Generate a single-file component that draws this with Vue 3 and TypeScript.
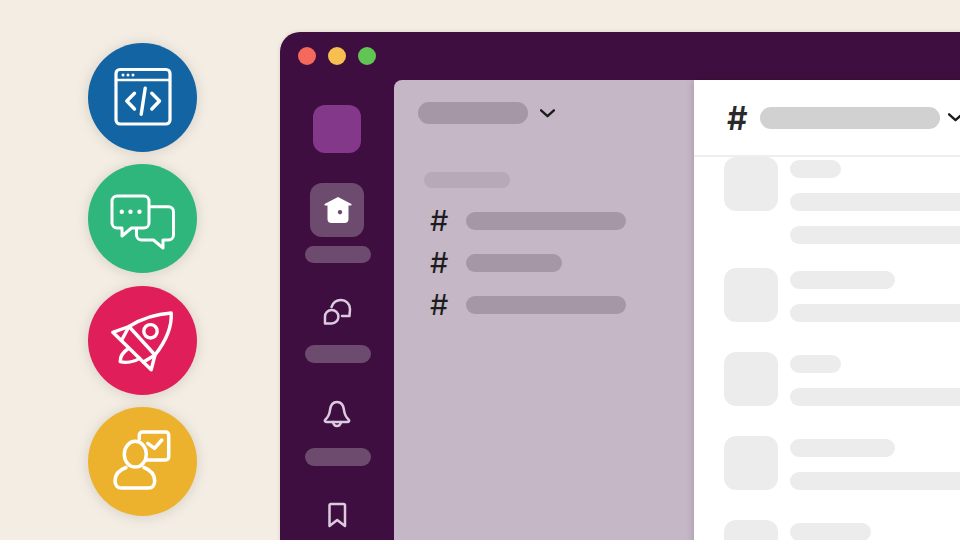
<script setup lang="ts">
interface Message {
  title: number
  lines: number
}

const channels: number[] = [160, 96, 160]

const messages: Message[] = [
  { title: 51, lines: 2 },
  { title: 105, lines: 1 },
  { title: 51, lines: 1 },
  { title: 105, lines: 1 },
  { title: 81, lines: 1 },
]
</script>

<template>
  <div class="scene">
    <div class="badges">
      <div class="badge blue">
        <svg viewBox="0 0 109 109" fill="none" stroke="#fff" stroke-linecap="round" stroke-linejoin="round">
          <rect x="28" y="26.5" width="54" height="54.5" rx="4" stroke-width="3.2" />
          <path d="M28 37H82" stroke-width="2.4" />
          <circle cx="35" cy="32" r="1.5" fill="#fff" stroke="none" />
          <circle cx="40" cy="32" r="1.5" fill="#fff" stroke="none" />
          <circle cx="45" cy="32" r="1.5" fill="#fff" stroke="none" />
          <path d="M46.5 50.3 38.8 58 46.5 66M63.8 50.3 71.5 58 63.8 66M57.2 45.3 53.2 71.3" stroke-width="3.4" />
        </svg>
      </div>
      <div class="badge green">
        <svg viewBox="0 0 109 109" fill="none" stroke="#fff" stroke-width="3" stroke-linecap="round" stroke-linejoin="round">
          <path d="M29 32H56a5 5 0 0 1 5 5V59a5 5 0 0 1-5 5H43.5L34 72V64H29a5 5 0 0 1-5-5V37a5 5 0 0 1 5-5Z" />
          <path d="M62 42.7H80.5a5 5 0 0 1 5 5V71a5 5 0 0 1-5 5H75V84L65.5 76H53.5a5 5 0 0 1-5-5V64.5" />
          <circle cx="33.8" cy="47.7" r="2.2" fill="#fff" stroke="none" />
          <circle cx="42.5" cy="47.7" r="2.2" fill="#fff" stroke="none" />
          <circle cx="51.5" cy="47.7" r="2.2" fill="#fff" stroke="none" />
        </svg>
      </div>
      <div class="badge red">
        <svg viewBox="0 0 109 109" fill="none" stroke="#fff" stroke-width="3.4" stroke-linecap="round" stroke-linejoin="round">
          <path d="M24.8 46.3 41 40.5C53 33 68 28 83.2 27 84 40 78 55 67 69L63.2 83.7Z" />
          <path d="M33.5 54.5 41 40.5 67 69 55.5 76" />
          <circle cx="62.5" cy="45.3" r="6.7" />
          <path d="M40.8 62.3C35 66 32 71 32.2 75.7 38 77 46 76 51.5 72.3" />
        </svg>
      </div>
      <div class="badge yellow">
        <svg viewBox="0 0 109 109" fill="none" stroke="#fff" stroke-width="3.5" stroke-linecap="round" stroke-linejoin="round">
          <path d="M51.3 32V28a3 3 0 0 1 3-3H77.7a3 3 0 0 1 3 3V50a3 3 0 0 1-3 3H58.5" />
          <path d="M59.8 36.3 66.5 41.3 73.8 33" />
          <ellipse cx="47.3" cy="47.2" rx="11" ry="12.9" />
          <path d="M38 60.5C31 63 27 68 27 74 27 78 29.5 81 33.5 81H60.5C64.5 81 66.7 78 66.7 74 66.7 68 62.5 63 56 60.5" />
        </svg>
      </div>
    </div>

    <div class="window">
      <div class="titlebar">
        <span class="light light-red"></span>
        <span class="light light-yellow"></span>
        <span class="light light-green"></span>
      </div>

      <div class="body">
        <nav class="rail">
          <div class="logo"></div>

          <div class="nav-item active">
            <div class="nav-icon">
              <svg viewBox="0 0 54 54">
                <path
                  fill="#fff"
                  fill-rule="evenodd"
                  d="M28 14 14.6 21Q13.8 22.5 15.5 22.5H17.5V36Q17.5 40 21.5 40H34.5Q38.5 40 38.5 36V22.5H40.5Q42.2 22.5 41.4 21ZM30 27a2.2 2.2 0 1 0 .01 0Z"
                />
              </svg>
            </div>
            <div class="nav-label"></div>
          </div>

          <div class="nav-item">
            <div class="nav-icon">
              <svg viewBox="0 0 54 54" class="rail-svg">
                <path d="M15 41.5V34.7A6.7 6.7 0 1 1 21.7 41.4Z" />
                <path d="M21.5 25C23 20.5 27 18 31 18 36 18 40 22 40 27 40 29.5 39.5 31.5 39.5 34H32" />
              </svg>
            </div>
            <div class="nav-label"></div>
          </div>

          <div class="nav-item">
            <div class="nav-icon">
              <svg viewBox="0 0 54 54" class="rail-svg">
                <path d="M27 17C22 17 20.5 21 20 25 19.5 30 18 32 15.5 34.5 14 36 15 37 17 37H37C39 37 40 36 38.5 34.5 36 32 34.5 30 34 25 33.5 21 32 17 27 17Z" />
                <path d="M23 37C23.5 40 25 41 27 41 29 41 30.5 40 31 37" />
              </svg>
            </div>
            <div class="nav-label"></div>
          </div>

          <div class="nav-item">
            <div class="nav-icon">
              <svg viewBox="0 0 54 54" class="rail-svg">
                <path d="M19.5 38V17.5A1.5 1.5 0 0 1 21 16H33.5A1.5 1.5 0 0 1 35 17.5V38L27.2 32Z" />
              </svg>
            </div>
          </div>
        </nav>

        <aside class="sidebar">
          <div class="workspace">
            <div class="workspace-name"></div>
            <svg class="chevron" viewBox="0 0 14 8">
              <path d="M1 1 7 6.5 13 1" />
            </svg>
          </div>
          <div class="section-name"></div>
          <div class="channels">
            <div v-for="(width, i) in channels" :key="i" class="channel">
              <span class="hash">#</span>
              <div class="channel-name" :style="{ width: width + 'px' }"></div>
            </div>
          </div>
        </aside>

        <main class="main">
          <header class="header">
            <span class="header-hash">#</span>
            <div class="header-name"></div>
            <svg class="chevron header-chevron" viewBox="0 0 14 8">
              <path d="M1 1 7 6.5 13 1" />
            </svg>
          </header>
          <div class="messages">
            <div v-for="(msg, i) in messages" :key="i" class="message" :class="{ long: msg.lines > 1 }">
              <div class="avatar"></div>
              <div class="lines">
                <div class="line" :style="{ width: msg.title + 'px' }"></div>
                <div v-for="n in msg.lines" :key="n" class="line full"></div>
              </div>
            </div>
          </div>
        </main>
      </div>
    </div>
  </div>
</template>

<style>
html,
body {
  background: #fff;
}
</style>

<style scoped>
.scene {
  display: flex;
  width: 960px;
  height: 540px;
  overflow: hidden;
  background: #f4ede3;
  font-family: "Liberation Sans", Arial, sans-serif;
}

.badges {
  flex: 0 0 280px;
  display: flex;
  flex-direction: column;
  align-items: center;
  gap: 12.3px;
  padding: 43px 0 0 5px;
  box-sizing: border-box;
}

.badge {
  width: 109px;
  height: 109px;
  flex-shrink: 0;
  border-radius: 50%;
  box-shadow: 0 1px 14px rgba(0, 0, 0, 0.13);
}

.badge svg {
  display: block;
  width: 109px;
  height: 109px;
}

.blue {
  background: #1264a3;
}

.green {
  background: #2eb67d;
}

.red {
  background: #e01e5a;
}

.yellow {
  background: #ecb22e;
}

.window {
  flex: 0 0 760px;
  margin-top: 32px;
  height: 560px;
  display: flex;
  flex-direction: column;
  background: #3f0e40;
  border-top-left-radius: 20px;
  box-shadow: 0 0 4px rgba(0, 0, 0, 0.12);
}

.titlebar {
  height: 48px;
  flex-shrink: 0;
  display: flex;
  align-items: center;
  gap: 12px;
  padding: 0 0 0 18px;
}

.light {
  width: 18px;
  height: 18px;
  border-radius: 50%;
}

.light-red {
  background: #f4695c;
}

.light-yellow {
  background: #f6bf4f;
}

.light-green {
  background: #61c554;
}

.body {
  flex: 1;
  display: flex;
  min-height: 0;
}

.rail {
  flex: 0 0 114px;
  display: flex;
  flex-direction: column;
  align-items: center;
}

.logo {
  width: 48px;
  height: 48px;
  margin-top: 25px;
  margin-bottom: 29.5px;
  border-radius: 12px;
  background: #83388a;
}

.nav-item {
  display: flex;
  flex-direction: column;
  align-items: center;
  margin-bottom: 22.5px;
}

.nav-item.active {
  margin-bottom: 19px;
}

.nav-icon {
  width: 54px;
  height: 54px;
  border-radius: 12px;
}

.nav-icon svg {
  display: block;
  width: 54px;
  height: 54px;
}

.active .nav-icon {
  background: #6d4b6e;
}

.rail-svg {
  fill: none;
  stroke: #dccbde;
  stroke-width: 2.5;
  stroke-linecap: round;
  stroke-linejoin: round;
}

.nav-label {
  width: 66px;
  height: 17.5px;
  margin: 9px 0 0 2px;
  border-radius: 9px;
  background: #6d4b6e;
}

.sidebar {
  flex: 0 0 300px;
  box-sizing: border-box;
  padding: 22px 0 0 24px;
  background: #c5b7c6;
  border-top-left-radius: 8px;
}

.workspace {
  display: flex;
  align-items: center;
  gap: 12px;
}

.workspace-name {
  width: 110px;
  height: 22px;
  border-radius: 11px;
  background: #a597a5;
}

.chevron {
  width: 15px;
  height: 9px;
  fill: none;
  stroke: #1d1c1d;
  stroke-width: 2.2;
  stroke-linecap: round;
  stroke-linejoin: round;
}

.section-name {
  width: 86px;
  height: 16px;
  margin: 47.5px 0 24.5px 6px;
  border-radius: 8px;
  background: #b8a9b8;
}

.channels {
  display: flex;
  flex-direction: column;
  gap: 24px;
  margin-left: 6px;
}

.channel {
  display: flex;
  align-items: center;
  height: 18px;
}

.hash {
  width: 42px;
  padding-left: 6px;
  box-sizing: border-box;
  font-family: Inter, "Liberation Sans", sans-serif;
  font-size: 29px;
  line-height: 18px;
  color: #1d1c1d;
}

.channel-name {
  height: 18px;
  border-radius: 9px;
  background: #a597a5;
}

.main {
  flex: 1;
  min-width: 0;
  background: #fff;
  box-shadow: 0 0 8px rgba(0, 0, 0, 0.18);
  position: relative;
}

.header {
  height: 75px;
  display: flex;
  align-items: center;
  padding-left: 33px;
  border-bottom: 2px solid #eee;
}

.header-hash {
  width: 33px;
  margin-top: 3px;
  font-family: Inter, "Liberation Sans", sans-serif;
  font-size: 32px;
  font-weight: 600;
  line-height: 34px;
  color: #2b2a2b;
}

.header-name {
  width: 180px;
  height: 22px;
  border-radius: 11px;
  background: #d1d1d1;
}

.header-chevron {
  margin-left: 8px;
}

.messages {
  padding-left: 30px;
}

.message {
  display: flex;
  gap: 12px;
  margin-bottom: 30px;
}

.message.long {
  margin-bottom: 24px;
}

.avatar {
  width: 54px;
  height: 54px;
  flex-shrink: 0;
  border-radius: 12px;
  background: #ececec;
}

.lines {
  flex: 1;
  display: flex;
  flex-direction: column;
  gap: 15px;
  padding-top: 3px;
}

.line {
  height: 18px;
  border-radius: 9px;
  background: #ececec;
}

.line.full {
  width: 100%;
}
</style>
